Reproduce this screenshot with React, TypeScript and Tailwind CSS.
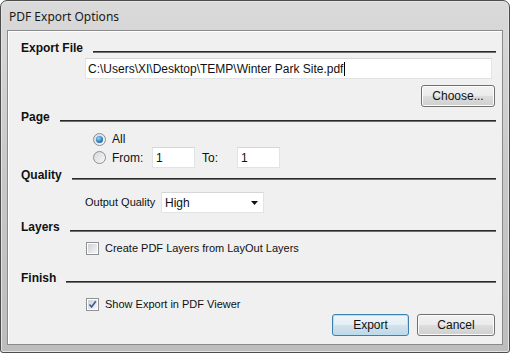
import React from "react";

const ui = { fontFamily: '"Liberation Sans", Arial, sans-serif' };

function Header({ label }: { label: string }) {
  return (
    <div className="flex items-start h-[14px] pl-[13px] pr-[6px]">
      <span className="font-bold text-[12px] leading-[14px] text-[#111]">{label}</span>
      <div className="flex-1 mt-[10px] ml-[10px] flex flex-col">
        <div className="h-[1px] bg-[#2a2a2a]" />
        <div className="h-[1px] bg-[#6e6e6e]" />
      </div>
    </div>
  );
}

function Radio({ checked }: { checked?: boolean }) {
  return (
    <div className="w-[13px] h-[13px] rounded-full border border-[#8b8f94] bg-gradient-to-br from-[#d6d8da] to-[#f8f8f8] flex items-center justify-center">
      {checked && (
        <div className="w-[7px] h-[7px] rounded-full bg-[radial-gradient(circle_at_40%_35%,#9ad8f8,#2a7fc4_55%,#0e4f8c)]" />
      )}
    </div>
  );
}

function Check({ checked }: { checked?: boolean }) {
  return (
    <div className="w-[13px] h-[13px] border border-[#8e9196] bg-white p-[1px]">
      <div className="w-full h-full bg-gradient-to-br from-[#d0d2d5] to-[#f6f6f6] relative">
        {checked && (
          <svg viewBox="0 0 9 9" className="absolute left-0 top-0 w-[9px] h-[9px]">
            <path d="M1.5 4.5 L3.6 7 L7.8 1.2" fill="none" stroke="#3e5a9a" strokeWidth="1.6" />
          </svg>
        )}
      </div>
    </div>
  );
}

function Button({ label, focused, w }: { label: string; focused?: boolean; w: number }) {
  return (
    <div
      style={{ width: w }}
      className={
        "h-[22px] rounded-[3px] border flex items-center justify-center text-[12px] text-[#111] " +
        (focused
          ? "border-[#3c7fb1] shadow-[inset_0_0_0_1px_#b6e0f5] bg-[linear-gradient(to_bottom,#f0f6fa_0%,#e3eef5_50%,#d3e3ee_51%,#c3d6e3_100%)]"
          : "border-[#707070] shadow-[inset_0_0_0_1px_#fcfcfc] bg-[linear-gradient(to_bottom,#f2f2f2_0%,#ebebeb_50%,#dddddd_51%,#cfcfcf_100%)]")
      }
    >
      {label}
    </div>
  );
}

export default function App() {
  return (
    <div className="w-[510px] h-[353px] bg-white" style={ui}>
      <div className="w-[510px] h-[353px] rounded-t-[7px] rounded-b-[3px] border border-[#4d4d4d] bg-gradient-to-b from-[#dadada] via-[#c8c8c8] to-[#bdbdbd] flex flex-col shadow-[inset_0_0_0_1px_#e4e4e4]">
        <div className="h-[29px] flex items-center pl-[8px] pt-[2px]">
          <span className="text-[12px] text-[#1a1a1a]" style={{ fontFamily: '"Noto Sans", "Open Sans", sans-serif' }}>
            PDF Export Options
          </span>
        </div>
        <div className="mx-[6px] h-[315px] border border-[#8a8a8a] bg-[#f0f0f0] shadow-[inset_1px_1px_0_#ffffff] flex flex-col pt-[10px]">
          <Header label="Export File" />
          <div className="mt-[3px] ml-[77px] mr-[10px] h-[21px] bg-white border border-[#e2e3e4] border-t-[#d5d6d8] flex items-center pl-[2px] text-[12px] text-[#111]">
            C:\Users\XI\Desktop\TEMP\Winter Park Site.pdf
            <span className="w-[1px] h-[14px] bg-black ml-[1px]" />
          </div>
          <div className="mt-[6px] flex justify-end pr-[7px]">
            <Button label="Choose..." w={74} />
          </div>
          <div className="mt-[3px]">
            <Header label="Page" />
          </div>
          <div className="mt-[7px] h-[16px] flex items-center pl-[85px]">
            <Radio checked />
            <span className="ml-[6px] text-[12px] text-[#111]">All</span>
          </div>
          <div className="h-[21px] flex items-center pl-[85px]">
            <Radio />
            <span className="ml-[6px] text-[12px] text-[#111] w-[40px]">From:</span>
            <div className="w-[43px] h-[21px] bg-white border border-[#e2e3e4] border-t-[#d5d6d8] flex items-center pl-[3px] text-[12px] text-[#111]">1</div>
            <span className="ml-[7px] text-[12px] text-[#111] w-[35px]">To:</span>
            <div className="w-[43px] h-[21px] bg-white border border-[#e2e3e4] border-t-[#d5d6d8] flex items-center pl-[3px] text-[12px] text-[#111]">1</div>
          </div>
          <Header label="Quality" />
          <div className="mt-[10px] h-[21px] flex items-center pl-[77px]">
            <span className="text-[11px] text-[#111] w-[76px] whitespace-nowrap">Output Quality</span>
            <div className="w-[103px] h-[21px] bg-white border border-[#e2e3e4] border-t-[#d5d6d8] flex items-center pl-[3px] text-[12px] text-[#111]">
              <span className="flex-1">High</span>
              <svg viewBox="0 0 7 4" className="w-[7px] h-[4px] mr-[5px]">
                <path d="M0 0 H7 L3.5 4 Z" fill="#111" />
              </svg>
            </div>
          </div>
          <div className="mt-[7px]">
            <Header label="Layers" />
          </div>
          <div className="mt-[7px] h-[14px] flex items-center pl-[78px]">
            <Check />
            <span className="ml-[6px] text-[11px] text-[#111]">Create PDF Layers from LayOut Layers</span>
          </div>
          <div className="mt-[16px]">
            <Header label="Finish" />
          </div>
          <div className="mt-[12px] h-[14px] flex items-center pl-[78px]">
            <Check checked />
            <span className="ml-[6px] text-[11px] text-[#111]">Show Export in PDF Viewer</span>
          </div>
          <div className="mt-[3px] flex justify-end pr-[7px] gap-[8px]">
            <Button label="Export" focused w={77} />
            <Button label="Cancel" w={78} />
          </div>
        </div>
      </div>
    </div>
  );
}
